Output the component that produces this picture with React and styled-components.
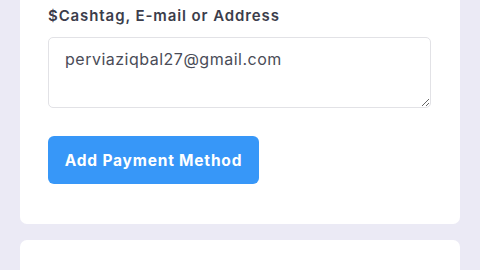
import React from "react";
import styled, { createGlobalStyle } from "styled-components";

const GlobalStyle = createGlobalStyle`
  html, body {
    margin: 0;
    padding: 0;
    background: #ebeaf5;
    font-family: "Inter", "Open Sans", sans-serif;
    overflow: hidden;
  }
`;

const Page = styled.div`
  display: flex;
  flex-direction: column;
  gap: 16px;
  padding: 0 20px;
  margin-top: -20px;
`;

const Card = styled.div`
  background: #ffffff;
  border-radius: 7px;
  padding: ${(p) => p.$padding || "25px 29px 40px 28px"};
  min-height: ${(p) => p.$minHeight || "auto"};
  box-sizing: border-box;
`;

const Label = styled.label`
  display: block;
  font-size: 15px;
  line-height: 22px;
  font-weight: 600;
  letter-spacing: 0.9px;
  color: #3b3d4b;
  margin-bottom: 10px;
`;

const Input = styled.textarea`
  display: block;
  width: 100%;
  height: 71px;
  box-sizing: border-box;
  border: 1px solid #e2e2e6;
  border-radius: 5px;
  padding: 9px 16px;
  font-family: inherit;
  font-size: 16px;
  line-height: 24px;
  letter-spacing: 0.5px;
  color: #4a4c57;
  resize: vertical;
  outline: none;
`;

const Button = styled.button`
  margin-top: 28px;
  width: 211px;
  height: 48px;
  border: none;
  border-radius: 6px;
  background: #3797f8;
  color: #ffffff;
  font-family: inherit;
  font-size: 15.5px;
  font-weight: 700;
  letter-spacing: 0.8px;
  cursor: pointer;
`;

export default function App() {
  return (
    <>
      <GlobalStyle />
      <Page>
        <Card>
          <Label htmlFor="cashtag">$Cashtag, E-mail or Address</Label>
          <Input id="cashtag" defaultValue="perviaziqbal27@gmail.com" />
          <Button>Add Payment Method</Button>
        </Card>
        <Card $minHeight="120px" />
      </Page>
    </>
  );
}
